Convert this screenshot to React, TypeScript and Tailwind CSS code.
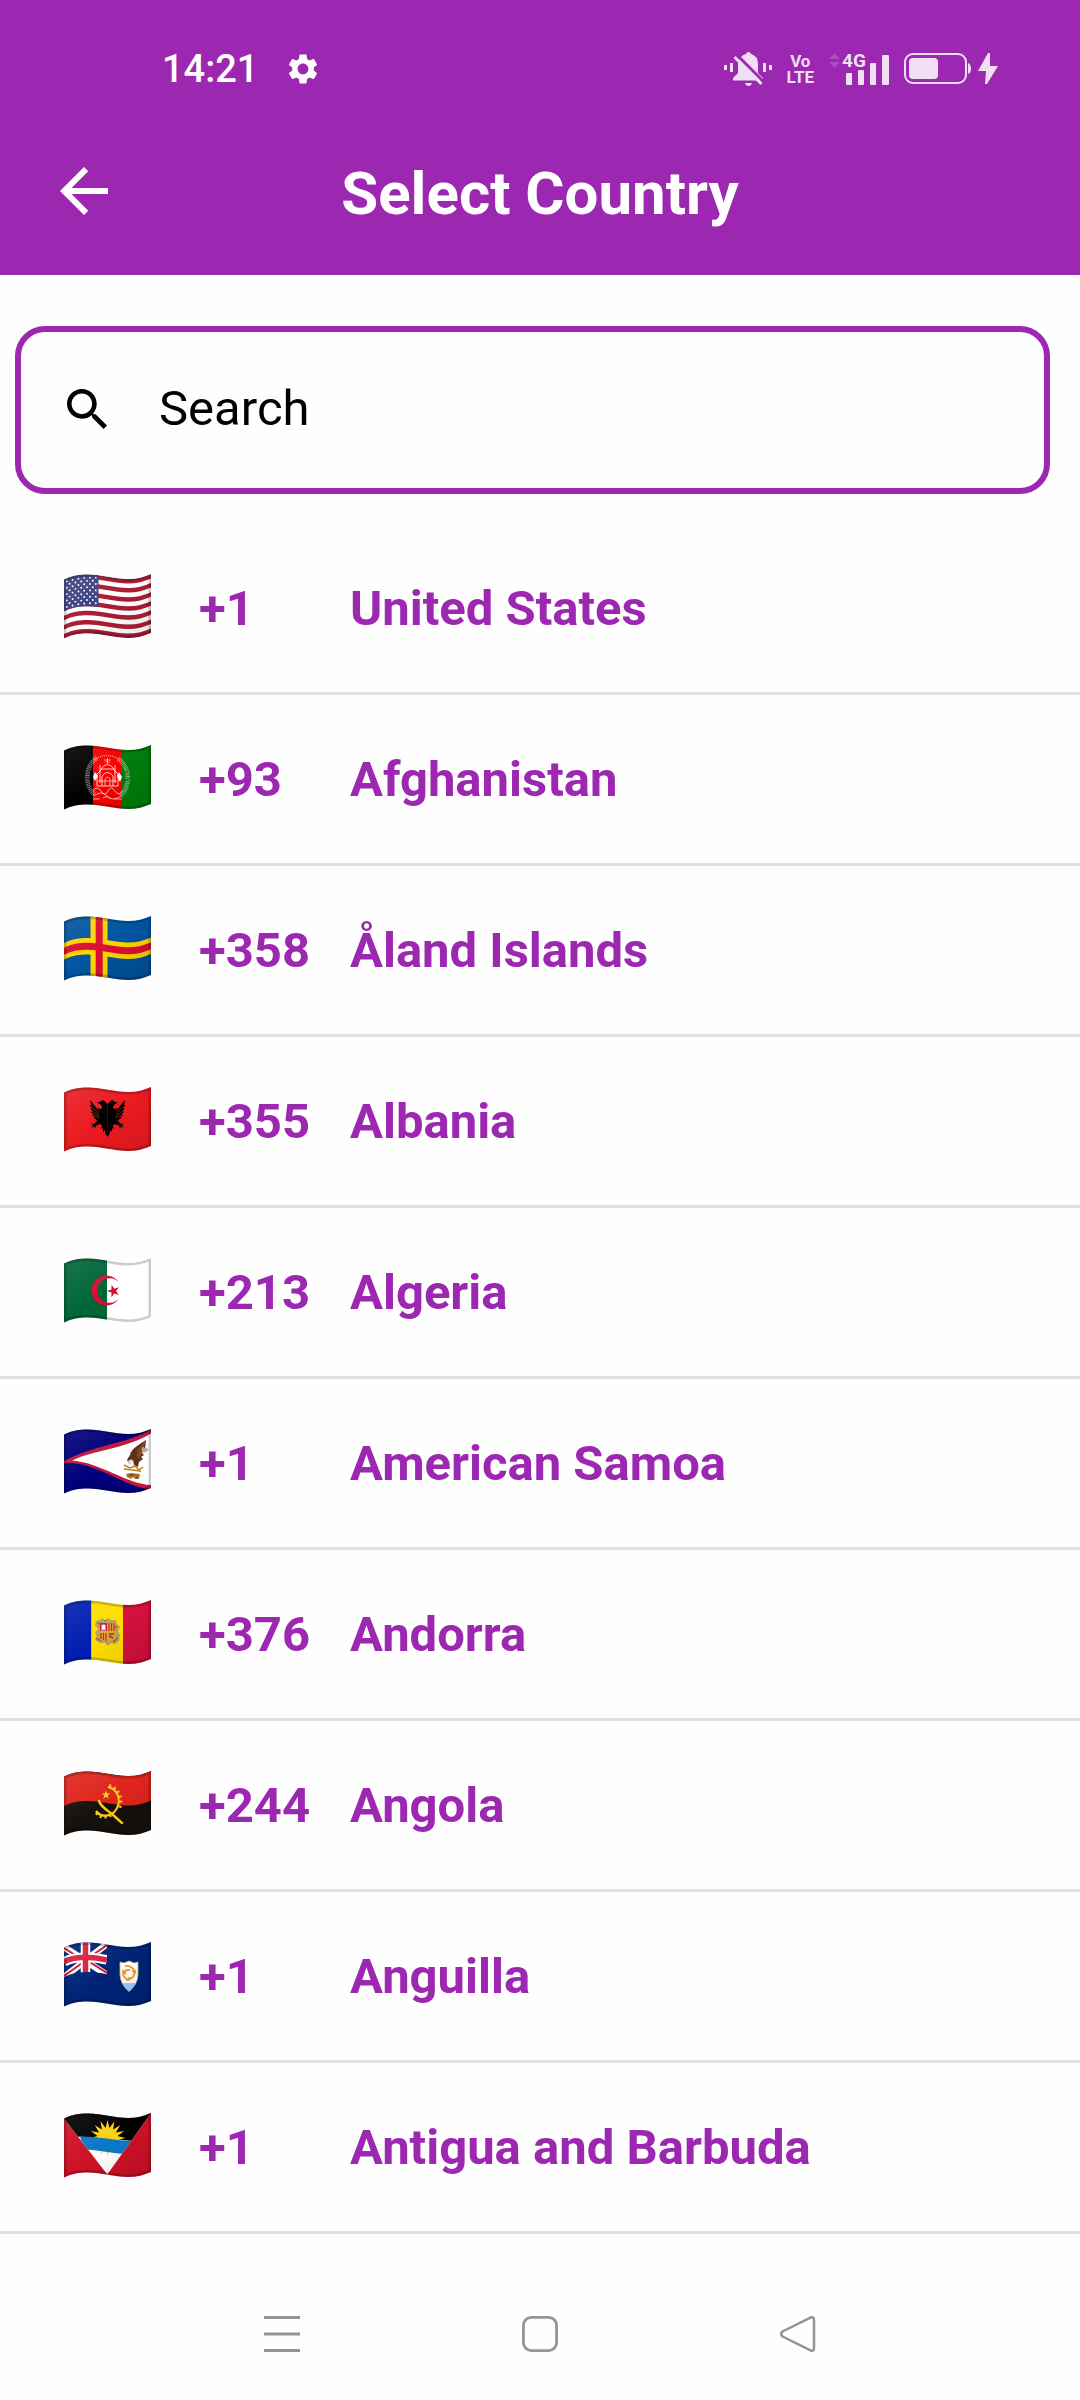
import React from "react";

/* ---------- Flag geometry: an 87 x 65 cloth with a waving top and bottom edge ---------- */

const FLAG_W = 87;
const FLAG_H = 59;

const forward = (y: number) =>
  `C8 ${1.5 + y} 15 ${0.5 + y} 24 ${0.5 + y}C38 ${0.5 + y} 50 ${5 + y} 64 ${5 + y}C73 ${5 + y} 80 ${3 + y} 87 ${y}`;
const backward = (y: number) =>
  `C80 ${3 + y} 73 ${5 + y} 64 ${5 + y}C50 ${5 + y} 38 ${0.5 + y} 24 ${0.5 + y}C15 ${0.5 + y} 8 ${1.5 + y} 0 ${5.5 + y}`;
const band = (y1: number, y2: number) =>
  `M0 ${5.5 + y1}${forward(y1)}V${y2}${backward(y2)}Z`;
const CLOTH = band(0, FLAG_H);

const star = (cx: number, cy: number, r: number, points = 5, inner = 0.4, turn = 0) => {
  const out: string[] = [];
  for (let i = 0; i < points * 2; i++) {
    const a = turn - Math.PI / 2 + (i * Math.PI) / points;
    const d = i % 2 ? r * inner : r;
    out.push(`${(cx + d * Math.cos(a)).toFixed(2)},${(cy + d * Math.sin(a)).toFixed(2)}`);
  }
  return out.join(" ");
};

type FlagProps = { id: string; name: string; shade: number; children: React.ReactNode };

function Flag({ id, name, shade, children }: FlagProps) {
  return (
    <svg viewBox="0 0 87 65" className="mb-[5px] h-[65px] w-[87px] shrink-0" role="img" aria-label={`Flag of ${name}`}>
      <defs>
        <clipPath id={`cloth-${id}`}>
          <path d={CLOTH} />
        </clipPath>
        <linearGradient id={`shade-${id}`} x1="0" y1="0" x2="1" y2="1">
          <stop offset="0" stopColor="#fff" stopOpacity="0.1" />
          <stop offset="0.5" stopColor="#fff" stopOpacity="0" />
          <stop offset="0.5" stopColor="#000" stopOpacity="0" />
          <stop offset="1" stopColor="#000" stopOpacity={shade} />
        </linearGradient>
      </defs>
      <g clipPath={`url(#cloth-${id})`}>
        {children}
        <path d={CLOTH} fill={`url(#shade-${id})`} />
        <path d={CLOTH} fill="none" stroke="#000" strokeOpacity="0.2" strokeWidth="5" />
      </g>
    </svg>
  );
}

function UnitedStates() {
  const h = FLAG_H / 13;
  const stars: React.ReactNode[] = [];
  for (let r = 0; r < 9; r++) {
    const n = r % 2 ? 5 : 6;
    for (let c = 0; c < n; c++) {
      const x = (r % 2 ? 5.6 : 2.8) + c * 5.8;
      const lift = 4.6 * Math.pow(1 - Math.min(x, 24) / 24, 1.6);
      stars.push(<circle key={`${r}-${c}`} cx={x} cy={3.6 + r * 3.2 + lift} r="0.95" fill="#fff" />);
    }
  }
  return (
    <>
      <rect width={FLAG_W} height="65" fill="#fff" />
      {[0, 2, 4, 6, 8, 10, 12].map((i) => (
        <path key={i} d={band(i * h, (i + 1) * h)} fill="#a91d33" />
      ))}
      <clipPath id="canton-us">
        <rect width="34.5" height="65" />
      </clipPath>
      <g clipPath="url(#canton-us)">
        <path d={band(0, 7 * h)} fill="#3c4180" />
        {stars}
      </g>
    </>
  );
}

function Afghanistan() {
  return (
    <>
      <rect width="29" height="65" fill="#000" />
      <rect x="29" width="29" height="65" fill="#f90000" />
      <rect x="58" width="29" height="65" fill="#007d0c" />
      <g fill="none" stroke="#fff">
        <path d="M33 13C21 20 20 41 31 50" strokeWidth="4.6" strokeDasharray="0.9 0.8" strokeOpacity="0.5" />
        <path d="M54 14C66 21 67 42 56 51" strokeWidth="4.6" strokeDasharray="0.9 0.8" strokeOpacity="0.5" />
        <path d="M31 15C36 9 51 9 56 16" strokeWidth="1.4" strokeDasharray="1 1" strokeOpacity="0.55" />
        <path d="M43.500 13V19M40 15H47M41 17H46" strokeWidth="0.8" strokeOpacity="0.7" />
        <path d="M33 41V29L38 24H49L54 29V41ZM38 41V31Q43.500 24 49 31V41M37 24Q43.500 15 50 24M36 20V38M51 20V38" strokeWidth="1" strokeOpacity="0.8" />
        <path d="M41 41V34Q43.500 30 46 34V41M34 36H53" strokeWidth="0.9" strokeOpacity="0.7" />
        <path d="M29 46Q33 40 37 46T44 46T51 46T58 46M30 51Q37 45 43 51T57 51M29 54H36M39 53Q43 50 47 54M50 54H58" strokeWidth="1" strokeOpacity="0.65" />
      </g>
      <path d="M31 27L34 31L31 36L29 32ZM55 27L53 31L56 37L58 32Z" fill="#fff" />
      <path d="M23 24L27 27M22 33L27 35M64 26L60 29M65 34L60 36" stroke="#000" strokeOpacity="0.5" strokeWidth="1" />
    </>
  );
}

function AlandIslands() {
  return (
    <>
      <rect width={FLAG_W} height="65" fill="#0054a0" />
      <path d={band(21.5, 38)} fill="#ffd300" />
      <rect x="26.500" width="17" height="65" fill="#ffd300" />
      <path d={band(26.3, 33.3)} fill="#da0e35" />
      <rect x="31.700" width="7" height="65" fill="#da0e35" />
    </>
  );
}

function Albania() {
  const half = "M43.500 17L41 14.500Q38 12 36 15L33 15.500L36.500 17.500L38 20L37 22L33 21L26 13L27 18L25.500 18L28 21L26.500 21.500L28.500 24L27 25L29.500 27L28 28.500L30.500 29.500L29.500 31.500L32 31.500L31.500 33.500L34 33L30 37L27 36.500L29 38.500L27 41L30 39.500L31 41.500L32 38.500L37 37L38 39L37 42L39 41L39 45L41 43L41.500 47L43.500 50Z";
  return (
    <>
      <rect width={FLAG_W} height="65" fill="#ea1b20" />
      <path d={half} fill="#000" />
      <path d={half} fill="#000" transform="translate(87 0) scale(-1 1)" />
      <path d="M29 16L35 24M28 20L35 27M28 24L35 29M29 28L36 31M58 16L52 24M59 20L52 27M59 24L52 29M58 28L51 31" stroke="#ea1b20" strokeWidth="0.6" />
    </>
  );
}

function Algeria() {
  return (
    <>
      <rect width={FLAG_W} height="65" fill="#fff" />
      <rect width="43" height="65" fill="#006637" />
      <path d="M55 24.500A15 15 0 1 0 55 40.500A12.300 12.300 0 1 1 55 24.500Z" fill="#d21034" />
      <polygon points={star(49.5, 33, 6.6, 5, 0.38, -0.3)} fill="#d21034" />
    </>
  );
}

function AmericanSamoa() {
  return (
    <>
      <rect width={FLAG_W} height="65" fill="#00007a" />
      <path d="M0 32C30 16 60 16 88 0V60C62 60 34 32 0 34Z" fill="#c1173a" />
      <path d="M8 31.500C34 20 62 20 88 4V56C64 56 38 34 8 31.500Z" fill="#fff" />
      <path d="M82 11Q77 14 73 17Q67 21 66 26L63 31L65 35L69 31L70 36L74 38L75 33L79 30L77 28L80 26L78 24L81 21Z" fill="#613018" />
      <path d="M81 13L73 23M80 17L73 27M79 21L74 29" stroke="#a2592b" strokeWidth="1.2" />
      <path d="M64 32L68 30L68 34L65 36Z" fill="#ddd" />
      <path d="M78 18L85 20L82 23L78 24Z" fill="#aaa" />
      <path d="M60 36L66 39L71 37L75 41L79 38M60 40L68 41L76 42M70 36L77 43" stroke="#ba8124" strokeWidth="1.5" fill="none" />
      <path d="M62 45L67 44L76 45L75 50H71L69 48L67 50L63 48Z" fill="#a87420" />
      <path d="M65 46H70M72 48H74" stroke="#4c3210" strokeWidth="1.2" />
    </>
  );
}

function Andorra() {
  return (
    <>
      <rect width="27.500" height="65" fill="#001eb0" />
      <rect x="27.500" width="31.500" height="65" fill="#ffde00" />
      <rect x="59" width="28" height="65" fill="#d5103c" />
      <path d="M32 21L36 20L38 18L41 20L44 18L47 20L52 20L53 24L56 27L54 31L56 35L55 41L51 44L47 43L44 46L41 43L36 43L31 40L33 37L31 33L34 29L31 25Z" fill="#b9a05b" />
      <path d="M33 23L36 24M53 26L51 28M32 38L37 41M54 38L49 42M41 20V22" stroke="#806d3c" strokeWidth="1.3" />
      <path d="M36 23H51V38Q50 41 43.500 41.500Q37 41 36 38Z" fill="#dba831" />
      <path d="M36 23H43V31H36Z" fill="#c9213a" />
      <path d="M38 25H41V29H38ZM37 30H42" fill="#fff" stroke="#fff" strokeWidth="0.8" />
      <path d="M45 23V31M47.500 23V31M50 23V31M37 33V39M39.500 33V40M42 33V41" stroke="#d0202e" strokeWidth="1.2" />
      <path d="M45 34H50M45 36L49 38" stroke="#b2202a" strokeWidth="1.5" />
    </>
  );
}

function Angola() {
  return (
    <>
      <rect width={FLAG_W} height="65" fill="#16100c" />
      <path d={band(0, 29.5)} fill="#df241c" />
      <g fill="none" stroke="#fbcf1b">
        <path d="M44 16C54 18 57 29 53 37C51 41 48 43 46 43" strokeWidth="2" />
        <path d="M45 15C55 17 59 29 55 38" strokeWidth="3.5" strokeDasharray="2 3" />
        <path d="M32 40C36 45 41 46 47 43" strokeWidth="2.4" />
        <path d="M32 42C37 48 42 47 48 44" strokeWidth="2.600" strokeDasharray="2 3" />
        <path d="M35 30C37 36 43 39 48 43L58 52" strokeWidth="2.400" strokeLinecap="round" />
      </g>
      <polygon points={star(42, 24, 4.6)} fill="#fbcf1b" />
    </>
  );
}

function Anguilla() {
  return (
    <>
      <rect width={FLAG_W} height="65" fill="#002377" />
      <clipPath id="canton-ai">
        <path d="M0 5.500C8 1.500 15 .5 24 .5C31 .5 37 1.500 43 2.700V32.200C37 31 31 30 24 30C15 30 8 31 0 35Z" />
      </clipPath>
      <g clipPath="url(#canton-ai)">
        <path d="M0 5L43 33M43 2L0 35" stroke="#fff" strokeWidth="6.500" />
        <path d="M0 6L21 19M43 31L24 19M43 3L23 17M0 34L21 19" stroke="#cf142b" strokeWidth="2" />
        <path d="M21.500 0V34M0 20C10 14 28 14 43 18" stroke="#fff" strokeWidth="9.500" fill="none" />
        <path d="M21.500 0V34M0 20C10 14 28 14 43 18" stroke="#d4213d" strokeWidth="5.500" fill="none" />
      </g>
      <path d="M56 20L60 21L65 19L70 21L74 20V32Q74 42 65 49.500Q56 42 56 32Z" fill="#fff" stroke="#c9bc7a" strokeWidth="0.8" />
      <path d="M58 41H72Q70 45.500 65 49Q60 45.500 58 41Z" fill="#9acbff" />
      <path d="M61 24Q68 23 71 30L68 29M71 28Q71 36 64 38L66 35M65 38Q58 36 59 29L62 32M60 31Q61 27 66 28" stroke="#f7941e" strokeWidth="1.800" fill="none" />
    </>
  );
}

function AntiguaAndBarbuda() {
  return (
    <>
      <rect width={FLAG_W} height="65" fill="#cf1126" />
      <clipPath id="wedge-ag">
        <path d="M0 5.500L0 0H87L43.300 61.500Z" />
      </clipPath>
      <g clipPath="url(#wedge-ag)">
        <rect width={FLAG_W} height="65" fill="#fff" />
        <path d="M0 0H87V29L63 27.500L43 25L0 23Z" fill="#000" />
        <polygon points={star(43.5, 25, 18, 16, 0.56)} fill="#fdd116" />
        <path d="M16 23.500Q30 23.500 43 25.500T72 28V41Q56 41.500 43 39T20 36.500Z" fill="#0a78c8" />
      </g>
    </>
  );
}

/* ---------- Status bar icons ---------- */

function GearIcon() {
  return (
    <svg viewBox="2 2 20 20" className="h-[30px] w-[30px]" fill="currentColor" aria-label="Settings notification" role="img">
      <path d="M19.140 12.940c.04-.3.06-.61.06-.94 0-.32-.02-.64-.07-.94l2.030-1.580c.18-.14.23-.41.12-.61l-1.920-3.320c-.12-.22-.37-.29-.59-.22l-2.390.96c-.5-.38-1.030-.7-1.620-.94l-.36-2.540c-.04-.24-.24-.41-.48-.41h-3.840c-.24 0-.43.17-.47.41l-.36 2.540c-.59.24-1.130.57-1.620.94l-2.390-.96c-.22-.08-.47 0-.59.22L2.740 8.870c-.12.21-.08.47.12.61l2.030 1.580c-.05.3-.09.63-.09.94s.02.64.07.94l-2.030 1.580c-.18.14-.23.41-.12.61l1.920 3.320c.12.22.37.29.59.22l2.390-.96c.5.38 1.030.7 1.620.94l.36 2.540c.05.24.24.41.48.41h3.840c.24 0 .44-.17.47-.41l.36-2.540c.59-.24 1.130-.56 1.620-.94l2.390.96c.22.08.47 0 .59-.22l1.920-3.320c.12-.22.07-.47-.12-.61l-2.010-1.580zM12 15.600c-1.980 0-3.600-1.620-3.600-3.600s1.620-3.600 3.600-3.600 3.600 1.620 3.600 3.600-1.620 3.600-3.600 3.600z" />
    </svg>
  );
}

function MutedBellIcon() {
  return (
    <svg viewBox="0 0 48 34" className="h-[34px] w-12" fill="currentColor" role="img" aria-label="Ringer off, vibrate">
      <path d="M0 13h3v5H0zM6 11h3v9H6zM39 11h3v9h-3zM45 13h3v5h-3zM21 31h7q-1 3-3.500 3T21 31z" />
      <path d="M17 5q2-2.500 5-3Q22.500 0 24.500 0T27 2q7 2 7 10v9l5 5v2.500H9V26l5-5v-9q0-2 1-4z" />
      <path d="M13 3L39 29" stroke="#9c27b0" strokeWidth="3" />
      <path d="M10.500 5L37.500 32" stroke="currentColor" strokeWidth="3" />
    </svg>
  );
}

function SignalIcon() {
  return (
    <svg viewBox="0 -6 60 44" className="h-11 w-[60px]" fill="currentColor" role="img" aria-label="4G signal">
      <path d="M0 6L5.500 0L11 6ZM0 9H11L5.500 15Z" opacity="0.2" />
      <text x="13" y="14" fontSize="19" fontWeight="700" fontFamily="Roboto, sans-serif">4G</text>
      <rect x="17" y="20" width="6" height="12" rx="1" />
      <rect x="29" y="17" width="6" height="15" rx="1" />
      <rect x="41" y="10" width="6" height="22" rx="1" />
      <rect x="53" y="2" width="7" height="30" rx="1" />
    </svg>
  );
}

function BatteryIcon() {
  return (
    <svg viewBox="0 0 94 32" className="h-8 w-[94px]" fill="currentColor" role="img" aria-label="Battery charging">
      <rect x="1" y="1" width="61" height="29" rx="8" fill="none" stroke="currentColor" strokeWidth="2" />
      <rect x="5" y="5" width="29" height="21" rx="4" />
      <path d="M64 10q3 1 3 5.500T64 21z" />
      <path d="M84 0L74 18h8l-1 13h2l11-18h-8V0z" />
    </svg>
  );
}

/* ---------- Page ---------- */

const COUNTRIES = [
  { id: "us", code: "+1", name: "United States", shade: 0.1, Art: UnitedStates },
  { id: "af", code: "+93", name: "Afghanistan", shade: 0.12, Art: Afghanistan },
  { id: "ax", code: "+358", name: "Åland Islands", shade: 0.16, Art: AlandIslands },
  { id: "al", code: "+355", name: "Albania", shade: 0.1, Art: Albania },
  { id: "dz", code: "+213", name: "Algeria", shade: 0, Art: Algeria },
  { id: "as", code: "+1", name: "American Samoa", shade: 0, Art: AmericanSamoa },
  { id: "ad", code: "+376", name: "Andorra", shade: 0.12, Art: Andorra },
  { id: "ao", code: "+244", name: "Angola", shade: 0.12, Art: Angola },
  { id: "ai", code: "+1", name: "Anguilla", shade: 0.12, Art: Anguilla },
  { id: "ag", code: "+1", name: "Antigua and Barbuda", shade: 0.12, Art: AntiguaAndBarbuda },
];

export default function App() {
  return (
    <div className="flex min-h-screen flex-col bg-[#fefefe] font-['Roboto',sans-serif]">
      <header className="bg-[#9c27b0] text-white">
        <div className="flex h-[138px] items-center justify-between pr-[82px] pl-[162px]">
          <div className="flex items-center gap-[30px]">
            <span className="text-[38px] leading-none font-medium">14:21</span>
            <GearIcon />
          </div>
          <div className="flex items-center gap-[15px] text-[#f0def3]">
            <MutedBellIcon />
            <span className="flex flex-col items-center text-[17px] leading-4 font-bold">
              <span>Vo</span>
              <span>LTE</span>
            </span>
            <SignalIcon />
            <BatteryIcon />
          </div>
        </div>
        <div className="flex h-[137px] items-start px-12">
          <button type="button" aria-label="Back" className="flex h-[106px] w-[72px] items-center justify-center">
            <svg viewBox="4 4 16 16" className="h-12 w-12" fill="currentColor" aria-hidden="true">
              <path d="M20 11H7.830l5.590-5.590L12 4l-8 8 8 8 1.410-1.410L7.830 13H20v-2z" />
            </svg>
          </button>
          <h1 className="flex-1 text-center text-[60px] leading-[112px] font-bold">Select Country</h1>
          <div className="w-[72px]" />
        </div>
      </header>

      <main className="flex-1">
        <label className="mt-[51px] mr-[30px] mb-[30px] ml-[15px] flex h-[168px] items-center gap-[52px] rounded-[30px] border-[6px] border-[#9c27b0] pb-[2px] pl-[46px]">
          <svg viewBox="3 3 17.500 17.500" className="h-10 w-10 shrink-0" fill="#000" aria-hidden="true">
            <path d="M15.500 14h-.79l-.28-.27C15.410 12.590 16 11.110 16 9.500 16 5.910 13.090 3 9.500 3S3 5.910 3 9.500 5.910 16 9.500 16c1.610 0 3.090-.59 4.230-1.570l.27.28v.79l5 4.990L20.490 19l-4.990-5zm-6 0C7.010 14 5 11.990 5 9.500S7.010 5 9.500 5 14 7.010 14 9.500 11.990 14 9.500 14z" />
          </svg>
          <input
            type="text"
            aria-label="Search"
            placeholder="Search"
            className="min-w-0 flex-1 bg-transparent text-[49px] leading-[64px] text-black outline-none placeholder:text-black"
          />
        </label>

        <ul>
          {COUNTRIES.map(({ id, code, name, shade, Art }) => (
            <li key={id} className="border-b-[3px] border-[#e0e0e0]">
              <button type="button" className="flex h-[168px] w-full items-center pt-[2px] pl-16 text-left text-[49px] leading-[64px] font-bold text-[#9c27b0]">
                <Flag id={id} name={name} shade={shade}>
                  <Art />
                </Flag>
                <span className="ml-12 w-[151px] shrink-0">{code}</span>
                <span>{name}</span>
              </button>
            </li>
          ))}
        </ul>
      </main>

      <nav className="flex h-[132px] items-center justify-around px-[153px] text-[#949494]">
        <button type="button" aria-label="Recent apps">
          <svg viewBox="0 0 36 36" className="h-9 w-9" stroke="currentColor" strokeWidth="3" aria-hidden="true">
            <path d="M0 1.500H36M0 18H36M0 34.500H36" />
          </svg>
        </button>
        <button type="button" aria-label="Home">
          <svg viewBox="0 0 36 36" className="h-9 w-9" fill="none" stroke="currentColor" strokeWidth="2.800" aria-hidden="true">
            <rect x="1.400" y="1.400" width="33.200" height="33.200" rx="8" />
          </svg>
        </button>
        <button type="button" aria-label="Back">
          <svg viewBox="0 0 36 36" className="h-9 w-9" fill="none" stroke="currentColor" strokeWidth="2.500" strokeLinejoin="round" aria-hidden="true">
            <path d="M2.500 15.500L30 1.800Q34 0 34 4V32Q34 36 30 34.200L2.500 20.500Q0 18 2.500 15.500Z" />
          </svg>
        </button>
      </nav>
    </div>
  );
}
